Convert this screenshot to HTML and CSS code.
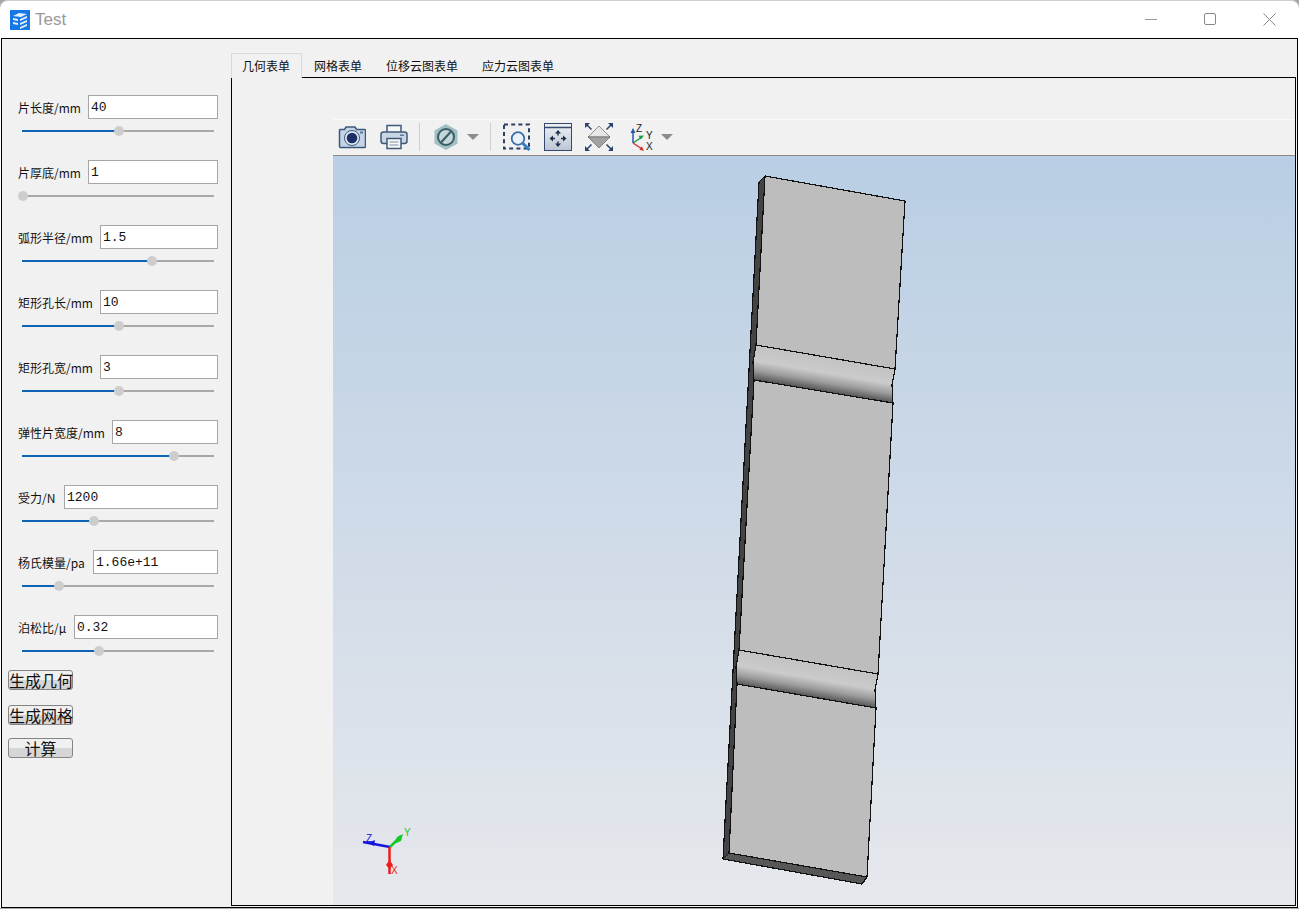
FILE: index.html
```html
<!DOCTYPE html>
<html lang="zh-CN">
<head>
    <meta charset="UTF-8">
    <title>Test</title>
    <link rel="stylesheet" href="styles.css">
</head>
<body>

<div class="window">
    <!-- title bar -->
    <div class="titlebar">
        <svg class="app-icon" width="20" height="20" viewBox="0 0 20 20">
            <rect width="20" height="20" fill="#1677e6"/>
            <path d="M3 6 9 3l8 1-6 3zM3 8l5 1v2L3 10zM3 12l5 1v2l-5-1zM10 9l7-3v2l-7 3zM10 13l7-3v2l-7 3zM10 17l7-3v2l-7 3z" fill="#e4f0fc"/>
        </svg>
        <span class="title-text">Test</span>
        <div class="win-buttons">
            <svg width="13" height="13" viewBox="0 0 13 13"><path d="M0 6.5h12" stroke="#999" fill="none"/></svg>
            <svg width="13" height="13" viewBox="0 0 13 13"><rect x=".5" y=".5" width="11" height="11" rx="1.5" stroke="#888" fill="none"/></svg>
            <svg width="13" height="13" viewBox="0 0 13 13"><path d="M.5.5l12 12M12.5.5l-12 12" stroke="#888" fill="none"/></svg>
        </div>
    </div>

    <div class="main">
        <!-- parameter form -->
        <div class="side">
            <div class="field">
                <div class="field-row"><label class="w63">片长度/mm</label><input type="text" value="40"></div>
                <div class="slider"><div class="fill" style="width:97px"><i class="thumb"></i></div></div>
            </div>
            <div class="field">
                <div class="field-row"><label class="w63">片厚底/mm</label><input type="text" value="1"></div>
                <div class="slider"><div class="fill" style="width:1px"><i class="thumb"></i></div></div>
            </div>
            <div class="field">
                <div class="field-row"><label class="w75">弧形半径/mm</label><input type="text" value="1.5"></div>
                <div class="slider"><div class="fill" style="width:130px"><i class="thumb"></i></div></div>
            </div>
            <div class="field">
                <div class="field-row"><label class="w75">矩形孔长/mm</label><input type="text" value="10"></div>
                <div class="slider"><div class="fill" style="width:97px"><i class="thumb"></i></div></div>
            </div>
            <div class="field">
                <div class="field-row"><label class="w75">矩形孔宽/mm</label><input type="text" value="3"></div>
                <div class="slider"><div class="fill" style="width:97px"><i class="thumb"></i></div></div>
            </div>
            <div class="field">
                <div class="field-row"><label class="w87">弹性片宽度/mm</label><input type="text" value="8"></div>
                <div class="slider"><div class="fill" style="width:152px"><i class="thumb"></i></div></div>
            </div>
            <div class="field">
                <div class="field-row"><label class="w39">受力/N</label><input type="text" value="1200"></div>
                <div class="slider"><div class="fill" style="width:72px"><i class="thumb"></i></div></div>
            </div>
            <div class="field">
                <div class="field-row"><label class="w68">杨氏模量/pa</label><input type="text" value="1.66e+11"></div>
                <div class="slider"><div class="fill" style="width:37px"><i class="thumb"></i></div></div>
            </div>
            <div class="field">
                <div class="field-row"><label class="w49">泊松比/μ</label><input type="text" value="0.32"></div>
                <div class="slider"><div class="fill" style="width:77px"><i class="thumb"></i></div></div>
            </div>
            <button class="btn btn-first">生成几何</button>
            <button class="btn btn-second">生成网格</button>
            <button class="btn btn-third">计算</button>
        </div>

        <!-- tabs and 3d view -->
        <div class="content">
            <div class="tabs">
                <div class="tab active">几何表单</div>
                <div class="tab">网格表单</div>
                <div class="tab">位移云图表单</div>
                <div class="tab">应力云图表单</div>
            </div>
            <div class="pane">
                <div class="viewer">
                    <div class="toolbar">
                        <svg class="t-camera" width="28" height="28" viewBox="0 0 28 28">
                            <path d="M1.500 6.500h5l1.500-2.500h9l1.500 2.500h8a1 1 0 0 1 1 1v16a1 1 0 0 1-1 1h-24a1 1 0 0 1-1-1v-16a1 1 0 0 1 1-1z" fill="#c3d4e8" stroke="#3c5878" stroke-width="1.500"/>
                            <circle cx="14" cy="15" r="7.500" fill="#e3ebf4" stroke="#3c5878"/>
                            <circle cx="14" cy="15" r="5.300" fill="#1c2f66"/>
                            <rect x="22" y="8.500" width="3" height="2" fill="#5d7996"/>
                        </svg>
                        <svg class="t-print" width="28" height="28" viewBox="0 0 28 28">
                            <path d="M7 9V2.500h14V9" fill="#f6f6f6" stroke="#3f5a78" stroke-width="1.500"/>
                            <rect x="1" y="9" width="26" height="11.500" rx="2.500" fill="#c9d6e4" stroke="#3f5a78" stroke-width="1.500"/>
                            <rect x="7" y="15.500" width="14" height="10" fill="#f6f6f6" stroke="#3f5a78" stroke-width="1.500"/>
                            <path d="M9.500 19h9M9.500 22h9" stroke="#7e92a8"/>
                            <rect x="20" y="11.500" width="4" height="1.500" fill="#5d7996"/>
                        </svg>
                        <i class="sep"></i>
                        <svg class="t-hex" width="24" height="28" viewBox="0 0 24 28">
                            <path d="M12 1 23.500 7.500v13L12 27 .5 20.500v-13z" fill="#a3bfc4"/>
                            <circle cx="12" cy="14" r="8" fill="#c6d7da" stroke="#3a5f69" stroke-width="2"/>
                            <path d="M7 19.500 17 8.500" stroke="#3a5f69" stroke-width="2.200"/>
                        </svg>
                        <svg class="t-arrow" width="12" height="6" viewBox="0 0 12 6"><path d="M0 0h12L6 6z" fill="#8c8c8c"/></svg>
                        <i class="sep sep2"></i>
                        <svg class="t-zoom" width="28" height="28" viewBox="0 0 28 28">
                            <rect x="1" y="1.500" width="25" height="24" fill="none" stroke="#2c3f63" stroke-width="2" stroke-dasharray="4 3.200"/>
                            <circle cx="15" cy="15.500" r="6.300" fill="#e9f1f9" stroke="#3a6ea5" stroke-width="1.800"/>
                            <path d="M19.500 20 26.500 27" stroke="#2d7fc5" stroke-width="3"/>
                        </svg>
                        <svg class="t-fit" width="28" height="28" viewBox="0 0 28 28">
                            <defs><linearGradient id="fitBg" x1="0" y1="0" x2="0" y2="1"><stop offset="0" stop-color="#eef1f5"/><stop offset="1" stop-color="#bcc6d4"/></linearGradient></defs>
                            <rect x=".5" y=".5" width="27" height="27" fill="url(#fitBg)" stroke="#34496b"/>
                            <path d="M1 4.500h26" stroke="#34496b" stroke-width="1.500"/>
                            <path d="M14 12.500v-3M14 18.500v3M11 15.500h-3M17 15.500h3" stroke="#1d2d4d" stroke-width="1.400"/>
                            <path d="M14 7l-3 3.500h6zM14 24l-3-3.500h6zM5.500 15.500l3.500-3v6zM22.500 15.500l-3.500-3v6z" fill="#1d2d4d"/>
                        </svg>
                        <svg class="t-fit" width="28" height="28" viewBox="0 0 28 28">
                            <path d="M14 3 25 14H3z" fill="#e6e6e6" stroke="#666" stroke-width=".7"/>
                            <path d="M14 25 25 14H3z" fill="#a2a2a2" stroke="#666" stroke-width=".7"/>
                            <path d="M0 0h5L0 5zM28 0h-5l5 5zM0 28h5l-5-5zM28 28h-5l5-5z" fill="#29446c"/>
                            <path d="M2 2l4.500 4.500M26 2l-4.500 4.500M2 26l4.500-4.500M26 26l-4.500-4.500" stroke="#29446c" stroke-width="1.500"/>
                        </svg>
                        <svg class="t-axes" width="28" height="28" viewBox="0 0 28 28" font-family="Liberation Sans, sans-serif" font-size="10" fill="#222">
                            <path d="M5 20V8" stroke="#2457b0" stroke-width="1.500"/>
                            <path d="M5 5 2.500 10h5z" fill="#2457b0"/>
                            <path d="M5 20 14 14" stroke="#1f9a45" stroke-width="1.500"/>
                            <path d="M16 12.500l-5.500.2 2.200 3.800z" fill="#1f9a45"/>
                            <path d="M5 20 14 26" stroke="#d83030" stroke-width="1.500"/>
                            <path d="M16 28l-2.200-4.800-2.500 3.500z" fill="#d83030"/>
                            <text x="8" y="9">Z</text>
                            <text x="18" y="15.500">Y</text>
                            <text x="18" y="27">X</text>
                        </svg>
                        <svg class="t-arrow2" width="12" height="6" viewBox="0 0 12 6"><path d="M0 0h12L6 6z" fill="#8c8c8c"/></svg>
                    </div>
                    <div class="canvas">
                        <svg class="model" width="962" height="749" viewBox="333 156 962 749">
                            <defs>
                                <linearGradient id="slotA" gradientUnits="userSpaceOnUse" x1="828" y1="357" x2="822" y2="392">
                                    <stop offset="0" stop-color="#c2c2c2"/>
                                    <stop offset=".45" stop-color="#cbcbcb"/>
                                    <stop offset=".72" stop-color="#9c9c9c"/>
                                    <stop offset="1" stop-color="#4e4e4e"/>
                                </linearGradient>
                                <linearGradient id="slotB" gradientUnits="userSpaceOnUse" x1="811" y1="662" x2="805" y2="697">
                                    <stop offset="0" stop-color="#c2c2c2"/>
                                    <stop offset=".45" stop-color="#cbcbcb"/>
                                    <stop offset=".72" stop-color="#9c9c9c"/>
                                    <stop offset="1" stop-color="#4e4e4e"/>
                                </linearGradient>
                            </defs>
                            <g class="solid" stroke="#111" stroke-width="1.200" stroke-linejoin="round">
                                <path d="M765 176 759 182 723 859 729 853z" fill="#444"/>
                                <path d="M723 859 729 853 867 877 862 884z" fill="#575757"/>
                                <path d="M765 176 905 201 895 369 892 385 893 403 878 674 875 690 876 708 867 877 729 853 737 684 736 667 739 650 754 380 753 362 756 345z" fill="#bdbdbd"/>
                                <path d="M756 345 895 369 892 385 893 403 754 380 753 362z" fill="url(#slotA)"/>
                                <path d="M739 650 878 674 875 690 876 708 737 684 736 667z" fill="url(#slotB)"/>
                            </g>
                            <!-- orientation marker -->
                            <g stroke-width="2.500" fill="none">
                                <path d="M390 847 363 842" stroke="#1414e0"/>
                                <path d="M390 847 401 836" stroke="#14c828"/>
                                <path d="M389.500 847v27" stroke="#ee1c1c"/>
                            </g>
                            <path d="M368 843l7-3-1 6z" fill="#1414e0"/>
                            <path d="M394 844l3-7 6-3-2 7z" fill="#14c828"/>
                            <path d="M389.500 860l-3.500 5 3.500 4 3.500-4z" fill="#ee1c1c"/>
                            <g font-family="Liberation Sans, sans-serif" font-size="10">
                                <text x="366" y="842" fill="#1414e0">Z</text>
                                <text x="404" y="836" fill="#14c828">Y</text>
                                <text x="391" y="874" fill="#ee1c1c">X</text>
                            </g>
                        </svg>
                    </div>
                </div>
            </div>
        </div>
    </div>
</div>

</body>
</html>
```

FILE: styles.css
```css
/* page */
html, body {
    margin: 0;
    height: 100%;
    background: #a8a8a8;
}
body {
    font-family: "Liberation Sans", "Noto Sans CJK SC", sans-serif;
    font-size: 12px;
    color: #111;
    overflow: hidden;
}
.window {
    width: 1299px;
    height: 908px;
    display: flex;
    flex-direction: column;
    box-sizing: border-box;
    background: #fff;
    border-top: 1px solid #cfcfcf;
    border-radius: 8px 8px 0 0;
}

/* title bar */
.titlebar {
    height: 37px;
    flex: none;
    display: flex;
    align-items: center;
    padding-left: 10px;
}
.title-text {
    margin-left: 5px;
    font-size: 17px;
    color: #999;
}
.win-buttons {
    margin-left: auto;
    display: flex;
    gap: 46px;
    margin-right: 23px;
}

/* main frame */
.main {
    flex: 1;
    display: flex;
    margin: 0 1px;
    border: 1px solid #000;
    background: #f1f1f1;
    min-height: 0;
}

/* left form */
.side {
    width: 229px;
    flex: none;
    box-sizing: border-box;
    padding: 56px 0 0 6px;
}
.field {
    height: 65px;
    margin-left: 10px;
    width: 200px;
}
.field-row {
    display: flex;
    align-items: center;
}
.field-row label {
    flex: none;
    font-family: "Noto Sans CJK SC", sans-serif;
    font-size: 12px;
    white-space: nowrap;
}
.w39 { width: 46px; }
.w49 { width: 56px; }
.w63 { width: 70px; }
.w68 { width: 75px; }
.w75 { width: 82px; }
.w87 { width: 94px; }
.field-row input {
    flex: 1;
    min-width: 0;
    height: 24px;
    box-sizing: border-box;
    border: 1px solid #a6a6a6;
    background: #fff;
    padding: 0 2px;
    font-family: "Liberation Mono", "DejaVu Sans Mono", monospace;
    font-size: 13px;
    color: #111;
    border-radius: 0;
    outline: none;
}
.slider {
    position: relative;
    margin: 11px 0 0 4px;
    width: 192px;
    height: 2px;
    background: #a8a8a8;
}
.fill {
    position: relative;
    height: 2px;
    background: #0e63b4;
}
.thumb {
    position: absolute;
    right: -5px;
    top: -4px;
    width: 10px;
    height: 10px;
    border-radius: 50%;
    background: #cdcdcd;
}
.btn {
    display: block;
    width: 65px;
    height: 20px;
    padding: 0;
    box-sizing: border-box;
    border: 1px solid #858585;
    border-radius: 3px;
    background: linear-gradient(#f0f0f0 0, #f0f0f0 50%, #d6d6d6 50%, #d6d6d6 100%);
    font-family: "Noto Sans CJK SC", sans-serif;
    font-size: 16px;
    line-height: 16px;
    color: #111;
    white-space: nowrap;
}
.btn-first { margin-top: -10px; }
.btn-second { margin-top: 15px; }
.btn-third { margin-top: 13px; }

/* tabs */
.content {
    flex: 1;
    min-width: 0;
    display: flex;
    flex-direction: column;
    padding: 14px 1px 1px 0;
}
.tabs {
    display: flex;
    height: 24px;
    flex: none;
}
.tab {
    position: relative;
    height: 25px;
    box-sizing: border-box;
    padding: 0 11px;
    line-height: 26px;
    font-size: 12px;
    white-space: nowrap;
    border: 1px solid transparent;
    border-bottom: none;
}
.tab.active {
    z-index: 1;
    width: 71px;
    padding: 0 0 0 10px;
    background: #f1f1f1;
    border-color: #d9d9d9;
}
.pane {
    flex: 1;
    min-height: 0;
    border: 1px solid #000;
    padding: 41px 0 0 101px;
    display: flex;
}

/* 3d view */
.viewer {
    flex: 1;
    display: flex;
    flex-direction: column;
    min-width: 0;
}
.toolbar {
    height: 37px;
    flex: none;
    box-sizing: border-box;
    display: flex;
    align-items: center;
    padding-left: 5px;
    padding-bottom: 1px;
    background: #f1f1f1;
    border-top: 1px solid #fafafa;
    border-bottom: 1px solid #8a8a8a;
}
.sep {
    width: 1px;
    height: 28px;
    background: #cfcfcf;
    margin-left: 11px;
}
.t-print { margin-left: 14px; }
.t-hex { margin-left: 14px; }
.t-arrow { margin-left: 9px; }
.sep2 { margin-left: 11px; }
.t-zoom { margin-left: 12px; }
.t-fit { margin-left: 13px; }
.t-axes { margin-left: 15px; }
.t-arrow2 { margin-left: 5px; }
.canvas {
    flex: 1;
    min-height: 0;
    background: linear-gradient(#b9cee4, #e6e8ec);
}
.model {
    display: block;
}
.solid {
    shape-rendering: crispEdges;
}
```
